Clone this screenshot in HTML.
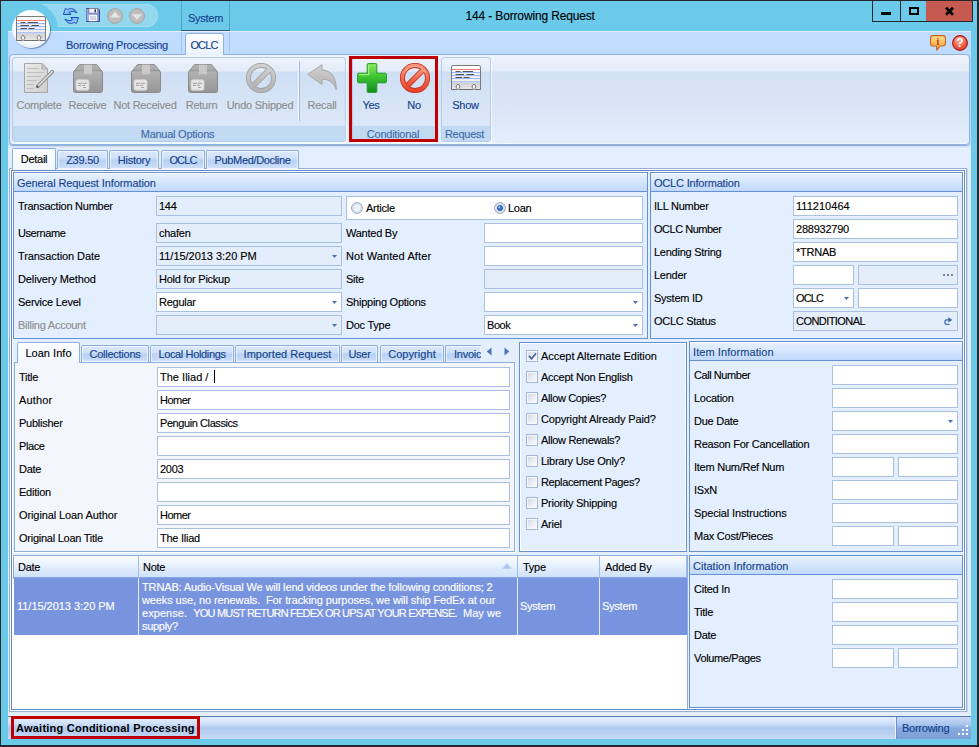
<!DOCTYPE html><html><head><meta charset="utf-8"><title>144 - Borrowing Request</title><style>
*{box-sizing:border-box;margin:0;padding:0}
html,body{width:979px;height:747px;overflow:hidden}
body{position:relative;background:#6bcaea;font-family:"Liberation Sans",sans-serif;font-size:11px;letter-spacing:-0.25px;color:#000;line-height:13px;-webkit-text-stroke:0.13px currentColor}
.a{position:absolute}
.t{position:absolute;white-space:nowrap;height:13px;line-height:13px}
.b{color:#15428b}
.g{color:#8d8d8d}
.c{text-align:center}
.fld{position:absolute;background:#fff;border:1px solid #a9c0e0;height:20px;padding:3px 0 0 2px;white-space:nowrap;overflow:hidden}
.ro{background:#e4edfa}
.grp{position:absolute;border:1px solid #6591d2;background:#e3efff}
.gh{position:absolute;left:0;right:0;top:0;height:19px;background:linear-gradient(#e6f0ff 0%,#d9e8fd 40%,#bfd8fb 100%);border-top:1px solid #fff;border-bottom:1px solid #6591d2;color:#15428b;padding:3px 0 0 3px;white-space:nowrap}
.tab{position:absolute;border:1px solid #8caede;border-bottom:none;border-radius:2px 2px 0 0;color:#15428b;text-align:center;white-space:nowrap;background:linear-gradient(#dde9fb 0%,#d0e1f9 38%,#b9d1f3 52%,#c4d9f6 80%,#d3e3fa 100%);box-shadow:inset 0 0 0 1px rgba(255,255,255,.6)}
.tab.sel{background:linear-gradient(#fbfdff 0%,#f3f7fd 100%);color:#000;box-shadow:none}
.arr{position:absolute;width:5px;height:3px;background:#4673b4;clip-path:polygon(0 0,100% 0,50% 100%)}
.cb{position:absolute;width:12px;height:12px;border:1px solid #a3b8d9;background:linear-gradient(135deg,#cfd4de 0%,#e9ecf2 50%,#fbfcfe 100%);box-shadow:inset 0 0 0 1px #f6f8fc}
.rg{position:absolute;border:1px solid #b4cbea;border-radius:3px;background:linear-gradient(#ecf2fb 0,#e4ecf8 13px,#cfdff3 14px,#d6e4f6 45px,#deeafa 100%);box-shadow:1px 1px 0 rgba(255,255,255,.7)}
.rgc{position:absolute;left:0;right:0;padding-right:3px;bottom:0;height:15px;background:#c2d9f2;border-radius:0 0 2px 2px;color:#3e6aaa;text-align:center;line-height:17px;white-space:nowrap}
</style></head><body>
<svg width="0" height="0" style="position:absolute"><defs>
<linearGradient id="gDoc" x1="0" y1="0" x2="1" y2="1"><stop offset="0" stop-color="#ebebeb"/><stop offset="1" stop-color="#cecece"/></linearGradient>
<linearGradient id="gBox" x1="0" y1="0" x2="0" y2="1"><stop offset="0" stop-color="#b2b2b2"/><stop offset="1" stop-color="#969696"/></linearGradient>
<linearGradient id="gLid" x1="0" y1="0" x2="0" y2="1"><stop offset="0" stop-color="#b3b3b3"/><stop offset="1" stop-color="#a6a6a6"/></linearGradient>
<linearGradient id="gPlus" x1="0" y1="0" x2="0" y2="1"><stop offset="0" stop-color="#8cea62"/><stop offset=".45" stop-color="#3fc632"/><stop offset="1" stop-color="#0f8c1c"/></linearGradient>
<linearGradient id="gRed" x1="0" y1="0" x2="0" y2="1"><stop offset="0" stop-color="#f9957a"/><stop offset="1" stop-color="#e8452f"/></linearGradient>
<linearGradient id="gGray" x1="0" y1="0" x2="0" y2="1"><stop offset="0" stop-color="#cfcfcf"/><stop offset="1" stop-color="#b4b4b4"/></linearGradient>
<linearGradient id="gCardB" x1="0" y1="0" x2="0" y2="1"><stop offset="0" stop-color="#d0d0d0"/><stop offset="1" stop-color="#e6e6e6"/></linearGradient>
<linearGradient id="gInfo" x1="0" y1="0" x2="0" y2="1"><stop offset="0" stop-color="#ffe08a"/><stop offset="1" stop-color="#ff9a2e"/></linearGradient>
<radialGradient id="gHelp" cx=".45" cy=".3" r=".8"><stop offset="0" stop-color="#ffb59a"/><stop offset=".6" stop-color="#ee5a42"/><stop offset="1" stop-color="#d93a2a"/></radialGradient>
<radialGradient id="gApp" cx=".5" cy=".35" r=".75"><stop offset="0" stop-color="#ffffff"/><stop offset=".7" stop-color="#f4f7fb"/><stop offset=".92" stop-color="#d5dfec"/><stop offset="1" stop-color="#aebfd8"/></radialGradient>
</defs></svg>
<div class="a" style="left:0;top:0;width:979px;height:747px;border:1px solid #23282c;border-right-width:2px;border-bottom-width:2px"></div>
<div class="t" style="left:465.500px;top:9px;font-size:12px;height:15px;line-height:15px;letter-spacing:-0.15px">144 - Borrowing Request</div>
<div class="a" style="left:872px;top:0;width:101px;height:22px;background:#23282c"></div>
<div class="a" style="left:873px;top:1px;width:27px;height:20px;background:#6bcaea"></div>
<div class="a" style="left:901px;top:1px;width:25px;height:20px;background:#6bcaea"></div>
<div class="a" style="left:926px;top:1px;width:46px;height:20px;background:#c75a50"></div>
<div class="a" style="left:881px;top:12px;width:10px;height:3px;background:#000"></div>
<div class="a" style="left:909px;top:7px;width:10px;height:8px;border:2px solid #000"></div>
<svg class="a" style="left:944px;top:6px" width="11" height="10" viewBox="0 0 11 10"><path d="M2 1.700L9 8.700M9 1.700L2 8.700" stroke="#000" stroke-width="2.700" fill="none"/></svg>
<div class="a" style="left:30px;top:4px;width:128px;height:23px;border-radius:0 11.500px 11.500px 0;background:rgba(255,255,255,.27);border:1px solid rgba(255,255,255,.16)"></div>
<div class="a" style="left:4px;top:2px;width:54px;height:54px;border-radius:50%;background:#6bcaea"></div>
<div class="a" style="left:181px;top:1px;width:1px;height:52px;background:linear-gradient(#56a9c6 0,#4f9ab6 30px,#a8c8ef 30px,#a8c8ef 100%)"></div>
<div class="a" style="left:229px;top:1px;width:1px;height:52px;background:linear-gradient(#56a9c6 0,#4f9ab6 30px,#a8c8ef 30px,#a8c8ef 100%)"></div>
<div class="a" style="left:181px;top:30px;width:49px;height:1px;background:#2f5f78"></div>
<div class="t b c" style="left:182px;top:12px;width:47px">System</div>
<div class="a" style="left:8px;top:31px;width:963px;height:23px;background:#bfdbff;border-top:1px solid #e3efff"></div>
<div class="a" style="left:8px;top:54px;width:963px;height:663px;background:#e3efff"></div>
<div class="a" style="left:8px;top:54px;width:963px;height:94px;background:linear-gradient(#bfdbff 0,#c7dffd 88px,#dbe9fc 100%)"></div>
<div class="a" style="left:181px;top:32px;width:1px;height:21px;background:#a8c8ef"></div><div class="a" style="left:229px;top:32px;width:1px;height:21px;background:#a8c8ef"></div>
<div class="t b" style="left:66px;top:39px">Borrowing Processing</div>
<div class="a" style="left:185px;top:33px;width:39px;height:22px;border:1px solid #8db2e3;border-bottom:none;border-radius:3px 3px 0 0;background:linear-gradient(#ffffff,#eaf1fb)"></div>
<div class="t b c" style="left:184px;top:39px;width:40px;letter-spacing:-0.841px;">OCLC</div>
<div class="a" style="left:12px;top:10px;width:38px;height:38px;border-radius:50%;background:radial-gradient(circle at 50% 38%,#fff 0,#fdfeff 55%,#e3eaf4 78%,#c3d0e4 92%,#8aa0c4 100%);box-shadow:1px 1px 1px rgba(40,70,120,.55)"></div><svg class="a" style="left:16px;top:16px" width="30" height="25" viewBox="0 0 30 25"><path d="M29.500 24.500V2Q29.500 .5 28 .5H2Q.5 .5 .5 2V24.500H7.8V23.300A1.900 1.900 0 1 0 6.2 23.300V24.500H23.8V23.300A1.900 1.900 0 1 0 22.2 23.300V24.500Z" fill="#fff" stroke="#7a7a7a"/><path d="M1 17.500H29V24H1Z" fill="url(#gCardB)"/><path d="M1 9H29M1 12H29M1 15.200H29" stroke="#f5efe4" stroke-width="1.600"/><path d="M1 4.500H29" stroke="#f47a7a" stroke-width="1"/><path d="M1 7.600H29M1 10.600H29M1 13.600H29M1 16.800H29" stroke="#7fa6f5" stroke-width=".9"/><path d="M4.500 6.500H9.500M11.500 6.500H22M4.500 9.500H13M15.500 9.500H23M4.500 12.500H11M12.500 12.500H18.500" stroke="#555" stroke-width="1"/><path d="M.5 24.500H7.8V23.300A1.900 1.900 0 1 0 6.2 23.300V24.500H23.8V23.300A1.900 1.900 0 1 0 22.2 23.300V24.500H29.500" fill="none" stroke="#6e6e6e"/><circle cx="7" cy="21.800" r="1.300" fill="#f4f6fa"/><rect x="6.6" y="22.500" width=".8" height="2.500" fill="#f4f6fa"/><circle cx="23" cy="21.800" r="1.300" fill="#f4f6fa"/><rect x="22.6" y="22.500" width=".8" height="2.500" fill="#f4f6fa"/></svg>
<div class="a" style="left:9px;top:54px;width:961px;height:91px;border:1px solid #8db2e3;border-radius:4px;background:linear-gradient(#eef3fb 0,#e3ebf7 16px,#d3e1f4 17px,#d9e6f7 50px,#e5eefb 100%);box-shadow:0 1px 1px rgba(120,145,190,.7),inset 0 -1px 0 #e9fbff"></div>
<div class="a" style="left:186px;top:54px;width:37px;height:2px;background:#ebf2fb"></div>
<div class="rg" style="left:12px;top:57px;width:334px;height:85px"><div class="rgc">Manual Options</div></div>
<div class="rg" style="left:352px;top:57px;width:85px;height:85px"><div class="rgc">Conditional</div></div>
<div class="rg" style="left:441px;top:57px;width:50px;height:85px"><div class="rgc">Request</div></div>
<div class="a" style="left:349px;top:56px;width:89px;height:86px;border:3px solid #c00000"></div>
<div class="a" style="left:298px;top:61px;width:1px;height:60px;background:#f3f8fe"></div><div class="a" style="left:299px;top:61px;width:1px;height:60px;background:#9dbbe6"></div>
<div class="t c g" style="left:-1px;top:99px;width:80px">Complete</div>
<div class="t c g" style="left:47.5px;top:99px;width:80px">Receive</div>
<div class="t c g" style="left:105px;top:99px;width:80px">Not Received</div>
<div class="t c g" style="left:161.5px;top:99px;width:80px">Return</div>
<div class="t c g" style="left:220px;top:99px;width:80px">Undo Shipped</div>
<div class="t c g" style="left:282px;top:99px;width:80px">Recall</div>
<div class="t c b" style="left:331px;top:99px;width:80px">Yes</div>
<div class="t c b" style="left:374px;top:99px;width:80px">No</div>
<div class="t c b" style="left:425.5px;top:99px;width:80px">Show</div>
<svg class="a" style="left:24px;top:63px" width="30" height="30" viewBox="0 0 30 30"><path d="M.5 .5H18L23.5 6V29.5H.5Z" fill="url(#gDoc)" stroke="#a6a6a6"/><path d="M18 .5V6H23.5Z" fill="#cfcfcf" stroke="#a6a6a6" stroke-linejoin="round"/><path d="M3 5.5H15" stroke="#bfbfbf" stroke-width="1.200"/><path d="M3 9.5H20" stroke="#bfbfbf" stroke-width="1.200"/><path d="M3 13.5H17" stroke="#bfbfbf" stroke-width="1.200"/><path d="M3 17.5H13" stroke="#bfbfbf" stroke-width="1.200"/><path d="M3 21.5H10" stroke="#bfbfbf" stroke-width="1.200"/><path d="M3 25.5H9" stroke="#bfbfbf" stroke-width="1.200"/><path d="M28.3 8.7L13.8 23.2" stroke="#8c8c8c" stroke-width="3.6" stroke-linecap="round"/><path d="M28.3 8.7L14.6 22.4" stroke="#d6d6d6" stroke-width="1.8" stroke-linecap="round"/><path d="M12.4 24.8l.6-2.6 2 2z" fill="#555"/></svg>
<svg class="a" style="left:73px;top:64px" width="30" height="29" viewBox="0 0 30 29"><path d="M.8 7.500L6.500 .5H23.500L29.200 7.500Z" fill="url(#gLid)" stroke="#909090" stroke-linejoin="round"/><rect x=".5" y="7" width="29" height="21.500" rx="2" fill="url(#gBox)" stroke="#8a8a8a"/><path d="M1.500 7.800H28.500" stroke="#b9b9b9" stroke-width=".8"/><path d="M11 .8H19V10.800l-1.300-1-1.400 1-1.300-1-1.400 1-1.300-1-1.300 1Z" fill="#c9c9c9"/><rect x="3" y="15.700" width="13" height="10.500" rx="1.800" fill="#e6e6e6" stroke="#d2d2d2" stroke-width=".8"/><path d="M5 19.300H9.300M10.100 19.300H13.900M5 21.400H7.800M9.300 21.400H11.900M10.300 23.500H12.900" stroke="#9c9c9c" stroke-width="1"/></svg>
<svg class="a" style="left:131px;top:64px" width="30" height="29" viewBox="0 0 30 29"><path d="M.8 7.500L6.500 .5H23.500L29.200 7.500Z" fill="url(#gLid)" stroke="#909090" stroke-linejoin="round"/><rect x=".5" y="7" width="29" height="21.500" rx="2" fill="url(#gBox)" stroke="#8a8a8a"/><path d="M1.500 7.800H28.500" stroke="#b9b9b9" stroke-width=".8"/><path d="M11 .8H19V10.800l-1.300-1-1.400 1-1.300-1-1.400 1-1.300-1-1.300 1Z" fill="#c9c9c9"/><rect x="3" y="15.700" width="13" height="10.500" rx="1.800" fill="#e6e6e6" stroke="#d2d2d2" stroke-width=".8"/><path d="M5 19.300H9.300M10.100 19.300H13.900M5 21.400H7.800M9.300 21.400H11.900M10.300 23.500H12.900" stroke="#9c9c9c" stroke-width="1"/></svg>
<svg class="a" style="left:188px;top:64px" width="30" height="29" viewBox="0 0 30 29"><path d="M.8 7.500L6.500 .5H23.500L29.200 7.500Z" fill="url(#gLid)" stroke="#909090" stroke-linejoin="round"/><rect x=".5" y="7" width="29" height="21.500" rx="2" fill="url(#gBox)" stroke="#8a8a8a"/><path d="M1.500 7.800H28.500" stroke="#b9b9b9" stroke-width=".8"/><path d="M11 .8H19V10.800l-1.300-1-1.400 1-1.300-1-1.400 1-1.300-1-1.300 1Z" fill="#c9c9c9"/><rect x="3" y="15.700" width="13" height="10.500" rx="1.800" fill="#e6e6e6" stroke="#d2d2d2" stroke-width=".8"/><path d="M5 19.300H9.300M10.100 19.300H13.900M5 21.400H7.800M9.300 21.400H11.900M10.300 23.500H12.900" stroke="#9c9c9c" stroke-width="1"/></svg>
<svg class="a" style="left:246px;top:63px" width="30" height="30" viewBox="0 0 30 30"><circle cx="15" cy="15" r="12.6" fill="none" stroke="#a2a2a2" stroke-width="5"/><path d="M7 23L23 7" stroke="#a2a2a2" stroke-width="5.6"/><circle cx="15" cy="15" r="12.6" fill="none" stroke="url(#gGray)" stroke-width="3.4"/><path d="M6.6 23.4L23.4 6.6" stroke="url(#gGray)" stroke-width="4"/></svg>
<svg class="a" style="left:307px;top:64px" width="30" height="27" viewBox="0 0 30 27"><path d="M.7 10.4L15 .7V6C23.5 6.2 29.3 12.5 29.3 25.6C26.5 18.5 22.5 15.2 15 15.2V20.6Z" fill="url(#gGray)" stroke="#a8a8a8" stroke-linejoin="round"/></svg>
<svg class="a" style="left:357px;top:63px" width="30" height="30" viewBox="0 0 30 30"><path d="M11.2 .6H18.8Q19.8 .6 19.8 1.6V10.2H28.4Q29.4 10.2 29.4 11.2V18.8Q29.4 19.8 28.4 19.8H19.8V28.4Q19.8 29.4 18.8 29.4H11.2Q10.2 29.4 10.2 28.4V19.8H1.6Q.6 19.8 .6 18.8V11.2Q.6 10.2 1.6 10.2H10.2V1.6Q10.2 .6 11.2 .6Z" fill="url(#gPlus)" stroke="#1f9a25" stroke-width="1"/><path d="M11.6 2V11.6H2" fill="none" stroke="#b5f59a" stroke-width="1.2" opacity=".8"/></svg>
<svg class="a" style="left:400px;top:63px" width="30" height="30" viewBox="0 0 30 30"><circle cx="15" cy="15" r="12.6" fill="none" stroke="#c9321f" stroke-width="5"/><path d="M7 23L23 7" stroke="#c9321f" stroke-width="5.6"/><circle cx="15" cy="15" r="12.6" fill="none" stroke="url(#gRed)" stroke-width="3.4"/><path d="M6.6 23.4L23.4 6.6" stroke="url(#gRed)" stroke-width="4"/><path d="M4.2 10A12 12 0 0 1 25.8 10" fill="none" stroke="#fbb09a" stroke-width="1.2" opacity=".8"/></svg>
<svg class="a" style="left:451px;top:65px" width="30" height="25" viewBox="0 0 30 25"><path d="M29.500 24.500V2Q29.500 .5 28 .5H2Q.5 .5 .5 2V24.500H7.8V23.300A1.900 1.900 0 1 0 6.2 23.300V24.500H23.8V23.300A1.900 1.900 0 1 0 22.2 23.300V24.500Z" fill="#fff" stroke="#7a7a7a"/><path d="M1 17.500H29V24H1Z" fill="url(#gCardB)"/><path d="M1 9H29M1 12H29M1 15.200H29" stroke="#f5efe4" stroke-width="1.600"/><path d="M1 4.500H29" stroke="#f47a7a" stroke-width="1"/><path d="M1 7.600H29M1 10.600H29M1 13.600H29M1 16.800H29" stroke="#7fa6f5" stroke-width=".9"/><path d="M4.500 6.500H9.500M11.500 6.500H22M4.500 9.500H13M15.500 9.500H23M4.500 12.500H11M12.500 12.500H18.500" stroke="#555" stroke-width="1"/><path d="M.5 24.500H7.8V23.300A1.900 1.900 0 1 0 6.2 23.300V24.500H23.8V23.300A1.900 1.900 0 1 0 22.2 23.300V24.500H29.500" fill="none" stroke="#6e6e6e"/><circle cx="7" cy="21.800" r="1.300" fill="#f4f6fa"/><rect x="6.6" y="22.500" width=".8" height="2.500" fill="#f4f6fa"/><circle cx="23" cy="21.800" r="1.300" fill="#f4f6fa"/><rect x="22.6" y="22.500" width=".8" height="2.500" fill="#f4f6fa"/></svg>
<svg class="a" style="left:63px;top:8px" width="16" height="16" viewBox="0 0 16 16"><defs><linearGradient id="gRf" x1="0" y1="0" x2="1" y2="1"><stop offset="0" stop-color="#cfe6ff"/><stop offset=".55" stop-color="#7db4f5"/><stop offset="1" stop-color="#2a6fe0"/></linearGradient></defs><path d="M.3 6.500L2.500 .3L4.600 1.700C8 -.6 12 .9 13.900 4.900C10.500 2.900 8 3.100 6.400 4.100L7.900 6.500Z" fill="url(#gRf)" stroke="#1a4fc4" stroke-width="1" stroke-linejoin="round"/><g transform="rotate(180 7.900 8)"><path d="M.3 6.500L2.500 .3L4.600 1.700C8 -.6 12 .9 13.900 4.900C10.500 2.900 8 3.100 6.400 4.100L7.900 6.500Z" fill="url(#gRf)" stroke="#1a4fc4" stroke-width="1" stroke-linejoin="round"/></g></svg>
<svg class="a" style="left:86px;top:8px" width="14" height="14" viewBox="0 0 14 14"><path d="M.5 .5H12L13.500 2V13.500H.5Z" fill="#8497e0" stroke="#39468f"/><path d="M1 1V13" stroke="#aab8ee" stroke-width="1"/><rect x="3" y=".6" width="8.500" height="4.400" fill="#f2f2f4" stroke="#8a7f78" stroke-width=".6"/><rect x="8.500" y="1.300" width="1.500" height="3" fill="#2c3566"/><rect x="2.800" y="6.800" width="8.400" height="6.400" fill="#f7f8fb"/><path d="M4 9H10M4 11H10" stroke="#a7adc4" stroke-width=".9"/></svg>
<svg class="a" style="left:107px;top:8px" width="16" height="16" viewBox="0 0 16 16"><circle cx="8" cy="8" r="7.4" fill="#bdbdbd" stroke="#a4a4a4"/><path d="M8 3.800L13 9.400H3Z" fill="#e7e7e7" stroke="#d4d4d4" stroke-width=".5"/></svg>
<svg class="a" style="left:129px;top:8px" width="16" height="16" viewBox="0 0 16 16"><circle cx="8" cy="8" r="7.4" fill="#bdbdbd" stroke="#a4a4a4"/><path d="M8 11.800L13 6.200H3Z" fill="#e7e7e7" stroke="#d4d4d4" stroke-width=".5"/></svg>
<svg class="a" style="left:930px;top:35px" width="16" height="16" viewBox="0 0 16 16"><path d="M3 .6H13Q15.4 .6 15.4 3V8.600Q15.400 11 13 11H10L6.800 15.200L6.500 11H3Q.6 11 .6 8.600V3Q.6 .6 3 .6Z" fill="url(#gInfo)" stroke="#c8641c" stroke-width="1.1" stroke-linejoin="round"/><text x="8" y="9.6" text-anchor="middle" font-family="Liberation Serif,serif" font-weight="bold" font-size="10" fill="#b23c1e" letter-spacing="0">i</text></svg>
<svg class="a" style="left:952px;top:35px" width="16" height="16" viewBox="0 0 16 16"><circle cx="8" cy="8" r="7.4" fill="url(#gHelp)" stroke="#a81818" stroke-width="1.1"/><text x="8" y="12.2" text-anchor="middle" font-family="Liberation Sans,sans-serif" font-weight="bold" font-size="12" fill="#fff" letter-spacing="0">?</text></svg>
<div class="a" style="left:9px;top:168px;width:958px;height:544px;border:1px solid #9aaed2;background:#fff;box-shadow:1px 1px 0 rgba(185,200,226,.6)"></div>
<div class="a" style="left:11px;top:170px;width:954px;height:540px;border:1px solid #5f8bcd;background:#e3efff;box-shadow:inset 0 0 0 1px #fff"></div>
<div class="tab sel" style="left:12px;top:148px;width:44px;height:22px;padding-top:4px;">Detail</div>
<div class="tab" style="left:57px;top:150px;width:51px;height:19px;padding-top:3px;">Z39.50</div>
<div class="tab" style="left:109px;top:150px;width:50px;height:19px;padding-top:3px;">History</div>
<div class="tab" style="left:161px;top:150px;width:44px;height:19px;padding-top:3px;letter-spacing:-0.841px;">OCLC</div>
<div class="tab" style="left:206px;top:150px;width:93px;height:19px;padding-top:3px;letter-spacing:-0.344px;">PubMed/Docline</div>
<div class="grp" style="left:13px;top:172px;width:635px;height:167px"><div class="gh" style="letter-spacing:-0.091px;">General Request Information</div></div>
<div class="t " style="left:18px;top:200px;">Transaction Number</div>
<div class="fld ro" style="left:156px;top:196px;width:186px;">144</div>
<div class="t " style="left:18px;top:227px;letter-spacing:-0.419px;">Username</div>
<div class="fld ro" style="left:156px;top:223px;width:186px;">chafen</div>
<div class="t " style="left:18px;top:250px;letter-spacing:-0.085px;">Transaction Date</div>
<div class="fld ro" style="left:156px;top:246px;width:186px;letter-spacing:-0.031px;">11/15/2013 3:20 PM</div>
<div class="arr" style="left:332px;top:255px"></div>
<div class="t " style="left:18px;top:273px;letter-spacing:-0.119px;">Delivery Method</div>
<div class="fld ro" style="left:156px;top:269px;width:186px;">Hold for Pickup</div>
<div class="t " style="left:18px;top:296px;">Service Level</div>
<div class="fld" style="left:156px;top:292px;width:186px;">Regular</div>
<div class="arr" style="left:332px;top:301px"></div>
<div class="t g" style="left:18px;top:319px;">Billing Account</div>
<div class="fld ro" style="left:156px;top:315px;width:186px;"></div>
<div class="arr" style="left:332px;top:324px"></div>
<div class="fld" style="left:346px;top:196px;width:297px;height:24px"></div>
<svg class="a" style="left:351px;top:202px" width="12" height="12" viewBox="0 0 12 12"><circle cx="6" cy="6" r="5.4" fill="#eef2f8" stroke="#8ea2c0"/><circle cx="6" cy="6" r="4" fill="none" stroke="#d5dbe6" stroke-width="1"/></svg>
<svg class="a" style="left:494px;top:202px" width="12" height="12" viewBox="0 0 12 12"><circle cx="6" cy="6" r="5.4" fill="#eef2f8" stroke="#8ea2c0"/><circle cx="6" cy="6" r="4" fill="none" stroke="#d5dbe6" stroke-width="1"/><circle cx="6" cy="6" r="2.6" fill="#3a78d8" stroke="#1f4a9c" stroke-width=".8"/><circle cx="5.3" cy="5.2" r=".9" fill="#b5d4fb"/></svg>
<div class="t " style="left:366px;top:202px;">Article</div>
<div class="t " style="left:508px;top:202px;">Loan</div>
<div class="t " style="left:346px;top:227px;">Wanted By</div>
<div class="fld" style="left:484px;top:223px;width:159px;"></div>
<div class="t " style="left:346px;top:250px;letter-spacing:0.115px;">Not Wanted After</div>
<div class="fld" style="left:484px;top:246px;width:159px;"></div>
<div class="t " style="left:346px;top:273px;">Site</div>
<div class="fld ro" style="left:484px;top:269px;width:159px;"></div>
<div class="t " style="left:346px;top:296px;">Shipping Options</div>
<div class="fld" style="left:484px;top:292px;width:159px;"></div>
<div class="arr" style="left:633px;top:301px"></div>
<div class="t " style="left:346px;top:319px;">Doc Type</div>
<div class="fld" style="left:484px;top:315px;width:159px;letter-spacing:-0.445px;">Book</div>
<div class="arr" style="left:633px;top:324px"></div>
<div class="grp" style="left:650px;top:172px;width:313px;height:167px"><div class="gh" style="letter-spacing:-0.191px;">OCLC Information</div></div>
<div class="t " style="left:654px;top:200px;">ILL Number</div>
<div class="t " style="left:654px;top:223px;letter-spacing:-0.486px;">OCLC Number</div>
<div class="t " style="left:654px;top:246px;">Lending String</div>
<div class="t " style="left:654px;top:269px;">Lender</div>
<div class="t " style="left:654px;top:292px;">System ID</div>
<div class="t " style="left:654px;top:315px;letter-spacing:-0.283px;">OCLC Status</div>
<div class="fld" style="left:793px;top:196px;width:165px;letter-spacing:0.029px;">111210464</div>
<div class="fld" style="left:793px;top:219px;width:165px;letter-spacing:-0.229px;">288932790</div>
<div class="fld" style="left:793px;top:242px;width:165px;">*TRNAB</div>
<div class="fld" style="left:793px;top:265px;width:61px;"></div>
<div class="fld ro" style="left:858px;top:265px;width:100px;"></div>
<div class="a" style="left:943px;top:274px;width:2px;height:2px;background:#827d78"></div>
<div class="a" style="left:947px;top:274px;width:2px;height:2px;background:#827d78"></div>
<div class="a" style="left:951px;top:274px;width:2px;height:2px;background:#827d78"></div>
<div class="fld" style="left:793px;top:288px;width:61px;letter-spacing:-0.841px;">OCLC</div>
<div class="arr" style="left:844px;top:297px"></div>
<div class="fld" style="left:858px;top:288px;width:100px;"></div>
<div class="fld ro" style="left:793px;top:311px;width:165px;letter-spacing:-0.553px;">CONDITIONAL</div>
<svg class="a" style="left:944px;top:316px" width="9" height="9" viewBox="0 0 9 9"><path d="M4.500 3.800H2.500Q1 3.800 1 5.300V7Q1 8.300 2.500 8.300H5.500" fill="none" stroke="#3f6db3" stroke-width="1.300"/><path d="M4.300 1L8.300 3.900L4.300 6.600V4.600H3.500V3.100H4.300Z" fill="#3f6db3"/></svg>
<div class="a" style="left:14px;top:362px;width:501px;height:190px;border:1px solid #8caede;background:#f3f7fd;box-shadow:1px 1px 0 #fff"></div>
<div class="tab sel" style="left:17px;top:342px;width:63px;height:21px;padding-top:4px;letter-spacing:0.036px;">Loan Info</div>
<div class="tab" style="left:81px;top:345px;width:68px;height:17px;padding-top:2px;">Collections</div>
<div class="tab" style="left:150px;top:345px;width:84px;height:17px;padding-top:2px;letter-spacing:-0.361px;">Local Holdings</div>
<div class="tab" style="left:235px;top:345px;width:105px;height:17px;padding-top:2px;letter-spacing:0.029px;">Imported Request</div>
<div class="tab" style="left:341px;top:345px;width:37px;height:17px;padding-top:2px;">User</div>
<div class="tab" style="left:380px;top:345px;width:64px;height:17px;padding-top:2px;letter-spacing:0.069px;">Copyright</div>
<div class="tab" style="left:445px;top:345px;width:36px;height:17px;padding-top:2px;text-align:left;padding-left:8px;overflow:hidden;border-right:none;border-radius:2px 0 0 0">Invoices</div>
<svg class="a" style="left:486px;top:347px" width="6" height="9" viewBox="0 0 6 9"><path d="M5.5 .5V8.500L.8 4.500Z" fill="#4a72b5"/></svg>
<svg class="a" style="left:504px;top:347px" width="6" height="9" viewBox="0 0 6 9"><path d="M.5 .5V8.500L5.200 4.500Z" fill="#4a72b5"/></svg>
<div class="t " style="left:19px;top:371px;">Title</div>
<div class="fld" style="left:157px;top:367px;width:353px;letter-spacing:0.012px;">The Iliad / <span style="display:inline-block;width:1px;height:13px;background:#000;vertical-align:top;margin:-1px 0 0 2px"></span></div>
<div class="t " style="left:19px;top:394px;letter-spacing:0.146px;">Author</div>
<div class="fld" style="left:157px;top:390px;width:353px;letter-spacing:-0.503px;">Homer</div>
<div class="t " style="left:19px;top:417px;">Publisher</div>
<div class="fld" style="left:157px;top:413px;width:353px;letter-spacing:-0.417px;">Penguin Classics</div>
<div class="t " style="left:19px;top:440px;letter-spacing:-0.406px;">Place</div>
<div class="fld" style="left:157px;top:436px;width:353px;"></div>
<div class="t " style="left:19px;top:463px;">Date</div>
<div class="fld" style="left:157px;top:459px;width:353px;">2003</div>
<div class="t " style="left:19px;top:486px;">Edition</div>
<div class="fld" style="left:157px;top:482px;width:353px;"></div>
<div class="t " style="left:19px;top:509px;letter-spacing:-0.1px;">Original Loan Author</div>
<div class="fld" style="left:157px;top:505px;width:353px;letter-spacing:-0.503px;">Homer</div>
<div class="t " style="left:19px;top:532px;">Original Loan Title</div>
<div class="fld" style="left:157px;top:528px;width:353px;">The Iliad</div>
<div class="a" style="left:519px;top:342px;width:168px;height:210px;border:1px solid #6591d2;background:#e3efff;box-shadow:inset 0 0 0 1px #fff"></div>
<div class="cb" style="left:526px;top:350px"></div>
<div class="t" style="left:541px;top:350px;letter-spacing:-0.037px;">Accept Alternate Edition</div>
<div class="cb" style="left:526px;top:371px"></div>
<div class="t" style="left:541px;top:371px;">Accept Non English</div>
<div class="cb" style="left:526px;top:392px"></div>
<div class="t" style="left:541px;top:392px;letter-spacing:-0.362px;">Allow Copies?</div>
<div class="cb" style="left:526px;top:413px"></div>
<div class="t" style="left:541px;top:413px;letter-spacing:-0.144px;">Copyright Already Paid?</div>
<div class="cb" style="left:526px;top:434px"></div>
<div class="t" style="left:541px;top:434px;letter-spacing:-0.318px;">Allow Renewals?</div>
<div class="cb" style="left:526px;top:455px"></div>
<div class="t" style="left:541px;top:455px;">Library Use Only?</div>
<div class="cb" style="left:526px;top:476px"></div>
<div class="t" style="left:541px;top:476px;letter-spacing:-0.355px;">Replacement Pages?</div>
<div class="cb" style="left:526px;top:497px"></div>
<div class="t" style="left:541px;top:497px;">Priority Shipping</div>
<div class="cb" style="left:526px;top:518px"></div>
<div class="t" style="left:541px;top:518px;">Ariel</div>
<svg class="a" style="left:528px;top:352px" width="9" height="9" viewBox="0 0 9 9"><path d="M1 3.800L3.500 6.800L8 1.200" stroke="#4a6a9c" stroke-width="1.800" fill="none"/></svg>
<div class="grp" style="left:689px;top:341px;width:274px;height:211px"><div class="gh" style="letter-spacing:0.076px;">Item Information</div></div>
<div class="t " style="left:694px;top:369px;letter-spacing:-0.44px;">Call Number</div>
<div class="fld" style="left:832px;top:365px;width:126px;"></div>
<div class="t " style="left:694px;top:392px;">Location</div>
<div class="fld" style="left:832px;top:388px;width:126px;"></div>
<div class="t " style="left:694px;top:415px;">Due Date</div>
<div class="fld" style="left:832px;top:411px;width:126px;"></div>
<div class="arr" style="left:948px;top:420px"></div>
<div class="t " style="left:694px;top:438px;">Reason For Cancellation</div>
<div class="fld" style="left:832px;top:434px;width:126px;"></div>
<div class="t " style="left:694px;top:461px;">Item Num/Ref Num</div>
<div class="fld" style="left:832px;top:457px;width:62px;"></div>
<div class="fld" style="left:898px;top:457px;width:60px;"></div>
<div class="t " style="left:694px;top:484px;">ISxN</div>
<div class="fld" style="left:832px;top:480px;width:126px;"></div>
<div class="t " style="left:694px;top:507px;letter-spacing:-0.135px;">Special Instructions</div>
<div class="fld" style="left:832px;top:503px;width:126px;"></div>
<div class="t " style="left:694px;top:530px;">Max Cost/Pieces</div>
<div class="fld" style="left:832px;top:526px;width:62px;"></div>
<div class="fld" style="left:898px;top:526px;width:60px;"></div>
<div class="grp" style="left:689px;top:555px;width:274px;height:153px"><div class="gh" style="letter-spacing:0.005px;">Citation Information</div></div>
<div class="t " style="left:694px;top:583px;">Cited In</div>
<div class="fld" style="left:832px;top:579px;width:126px;"></div>
<div class="t " style="left:694px;top:606px;">Title</div>
<div class="fld" style="left:832px;top:602px;width:126px;"></div>
<div class="t " style="left:694px;top:629px;">Date</div>
<div class="fld" style="left:832px;top:625px;width:126px;"></div>
<div class="t " style="left:694px;top:652px;letter-spacing:-0.353px;">Volume/Pages</div>
<div class="fld" style="left:832px;top:648px;width:62px;"></div>
<div class="fld" style="left:898px;top:648px;width:60px;"></div>
<div class="a" style="left:12px;top:555px;width:676px;height:154px;background:#fff;border-right:1px solid #8caede"></div>
<div class="a" style="left:13px;top:555px;width:675px;height:24px;border:1px solid #8caede;border-bottom:none"></div>
<div class="a" style="left:14px;top:556px;width:125px;height:22px;background:linear-gradient(#fbfdff 0%,#e9f2fe 40%,#cfe1fa 100%);border-right:1px solid #9ebfe8;border-bottom:1px solid #86aadf;padding:5px 0 0 4px;white-space:nowrap;">Date</div>
<div class="a" style="left:139px;top:556px;width:379px;height:22px;background:linear-gradient(#fbfdff 0%,#e9f2fe 40%,#cfe1fa 100%);border-right:1px solid #9ebfe8;border-bottom:1px solid #86aadf;padding:5px 0 0 4px;white-space:nowrap;">Note</div>
<div class="a" style="left:518px;top:556px;width:82px;height:22px;background:linear-gradient(#fbfdff 0%,#e9f2fe 40%,#cfe1fa 100%);border-right:1px solid #9ebfe8;border-bottom:1px solid #86aadf;padding:5px 0 0 5px;white-space:nowrap;">Type</div>
<div class="a" style="left:600px;top:556px;width:87px;height:22px;background:linear-gradient(#fbfdff 0%,#e9f2fe 40%,#cfe1fa 100%);border-right:1px solid #9ebfe8;border-bottom:1px solid #86aadf;padding:5px 0 0 5px;white-space:nowrap;letter-spacing:-0.125px;">Added By</div>
<svg class="a" style="left:502px;top:563px" width="10" height="6" viewBox="0 0 10 6"><path d="M5 .3L9.700 5.700H.3Z" fill="#a9c8f2"/></svg>
<div class="a" style="left:14px;top:578px;width:673px;height:57px;background:#7994de"></div>
<div class="a" style="left:138px;top:578px;width:1px;height:57px;background:#e6eefb"></div>
<div class="a" style="left:517px;top:578px;width:1px;height:57px;background:#e6eefb"></div>
<div class="a" style="left:599px;top:578px;width:1px;height:57px;background:#e6eefb"></div>
<div class="t" style="left:17px;top:600px;color:#fff;letter-spacing:-0.031px;">11/15/2013 3:20 PM</div>
<div class="a" style="left:142px;top:581px;color:#fff;line-height:13px;white-space:pre"><span style="letter-spacing:-0.142px">TRNAB: Audio-Visual We will lend videos under the following conditions; 2</span>
<span style="letter-spacing:-0.103px">weeks use, no renewals.  For tracking purposes, we will ship FedEx at our</span>
<span style="letter-spacing:0.053px">expense.  </span><span style="letter-spacing:-0.812px">YOU MUST RETURN FEDEX OR UPS AT YOUR EXPENSE.</span><span style="letter-spacing:0.073px">  May we</span>
<span style="letter-spacing:-0.289px">supply?</span></div>
<div class="t" style="left:520px;top:600px;color:#fff">System</div>
<div class="t" style="left:602px;top:600px;color:#fff">System</div>
<div class="a" style="left:8px;top:712px;width:963px;height:4px;background:linear-gradient(#dfe9f8,#e9f1fd)"></div>
<div class="a" style="left:8px;top:716px;width:963px;height:1px;background:#4f79b5"></div>
<div class="a" style="left:8px;top:717px;width:963px;height:22px;background:linear-gradient(#e6f0fe 0%,#cfe0f8 30%,#b0caef 50%,#b9d0f2 75%,#c9dcf7 100%)"></div>
<div class="a" style="left:896px;top:717px;width:75px;height:22px;background:linear-gradient(#c8dbf6 0%,#a9c4ed 35%,#88a9de 52%,#7d9fd4 100%);border-left:1px solid #6d90c8;box-shadow:-1px 0 0 #eef4fe"></div>
<div class="t b" style="left:902px;top:722px">Borrowing</div>
<div class="a" style="left:11px;top:716px;width:189px;height:23px;border:3px solid #c00000"></div>
<div class="t" style="left:16px;top:722px;font-weight:bold;-webkit-text-stroke:0;letter-spacing:0.234px">Awaiting Conditional Processing</div>
<div class="a" style="left:966px;top:733px;width:2px;height:2px;background:#fff"></div>
<div class="a" style="left:962px;top:733px;width:2px;height:2px;background:#fff"></div>
<div class="a" style="left:958px;top:733px;width:2px;height:2px;background:#fff"></div>
<div class="a" style="left:966px;top:729px;width:2px;height:2px;background:#fff"></div>
<div class="a" style="left:962px;top:729px;width:2px;height:2px;background:#fff"></div>
<div class="a" style="left:966px;top:725px;width:2px;height:2px;background:#fff"></div>
</body></html>
